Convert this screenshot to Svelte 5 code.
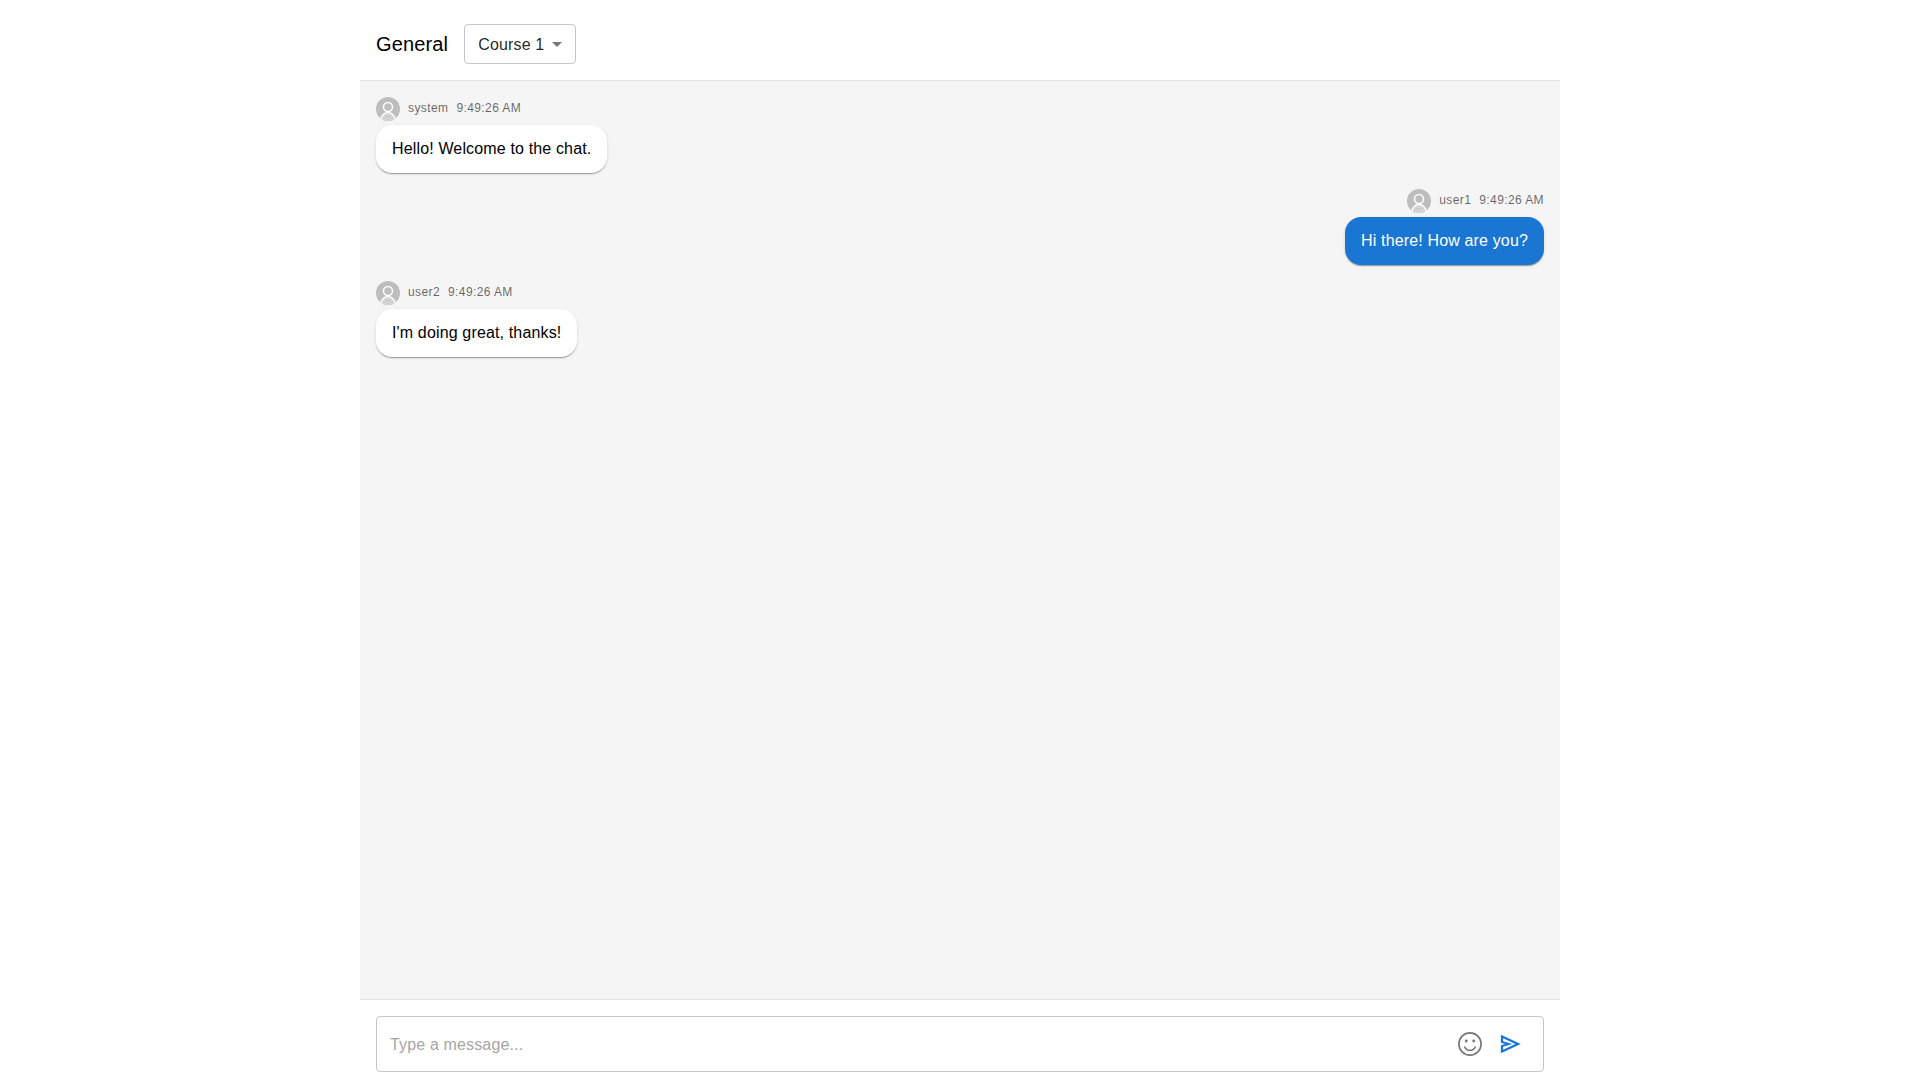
<script lang="ts">
    const messages = [
        { user: "system", time: "9:49:26 AM", text: "Hello! Welcome to the chat.", mine: false },
        { user: "user1", time: "9:49:26 AM", text: "Hi there! How are you?", mine: true },
        { user: "user2", time: "9:49:26 AM", text: "I'm doing great, thanks!", mine: false }
    ];
</script>

<div class="chat">
    <header class="header">
        <h1 class="title">General</h1>
        <div class="select">
            <span class="value">Course 1</span>
            <svg class="caret" viewBox="0 0 24 24"><path d="M7 10l5 5 5-5z" /></svg>
        </div>
    </header>

    <main class="messages">
        {#each messages as m}
            <div class="message" class:mine={m.mine}>
                <div class="meta">
                    <span class="avatar">
                        <svg viewBox="0 0 24 24">
                            <circle class="head" cx="12" cy="10" r="4.5" />
                            <path class="body" d="M4.5 25c0-6 3.5-9.500 7.500-9.500s7.500 3.500 7.500 9.500" />
                            <path class="dots" d="M10 19.500h.6M13.400 19.500h.6M11.700 21.200h.6" />
                        </svg>
                    </span>
                    <span class="name">{m.user}</span>
                    <span class="time">{m.time}</span>
                </div>
                <div class="bubble">{m.text}</div>
            </div>
        {/each}
    </main>

    <footer class="footer">
        <div class="input">
            <span class="placeholder">Type a message...</span>
            <button class="icon-btn" aria-label="Emoji">
                <svg viewBox="0 0 24 24">
                    <circle class="face" cx="12" cy="12" r="11.100" />
                    <circle class="eye" cx="8.300" cy="9" r="1.400" />
                    <circle class="eye" cx="15.700" cy="9" r="1.400" />
                    <path class="smile" d="M6.500 14.500c1 2.500 3 3.900 5.500 3.900s4.500-1.400 5.500-3.900" />
                </svg>
            </button>
            <button class="icon-btn" aria-label="Send">
                <svg viewBox="0 0 24 24">
                    <path class="send" d="M4 4.500L20 12 4 19.500v-5.500l6.500-2L4 10z" />
                </svg>
            </button>
        </div>
    </footer>
</div>

<style>
    :global(body) {
        margin: 0;
        background: #fff;
        overflow: hidden;
    }

    .chat {
        width: 1200px;
        height: 100vh;
        margin: 0 auto;
        display: flex;
        flex-direction: column;
        font-family: "Liberation Sans", Arial, sans-serif;
        color: rgba(0, 0, 0, 0.87);
    }

    .header {
        display: flex;
        align-items: center;
        gap: 16px;
        padding: 24px 16px 16px;
        border-bottom: 1px solid #e0e0e0;
    }

    .title {
        margin: 0;
        font-size: 20px;
        font-weight: 400;
        line-height: 40px;
        letter-spacing: 0.15px;
        color: #000;
    }

    .select {
        box-sizing: border-box;
        width: 112px;
        height: 40px;
        padding-left: 13px;
        display: flex;
        align-items: center;
        border: 1px solid #c4c4c4;
        border-radius: 4px;
        font-size: 16px;
        letter-spacing: 0.15px;
    }

    .value {
        padding-top: 2px;
    }

    .caret {
        width: 24px;
        height: 24px;
        margin-left: 1px;
        fill: #757575;
    }

    .messages {
        flex: 1;
        padding: 16px;
        background: #f5f5f5;
        border-bottom: 1px solid #e0e0e0;
    }

    .message {
        display: flex;
        flex-direction: column;
        align-items: flex-start;
        margin-bottom: 16px;
    }

    .message.mine {
        align-items: flex-end;
    }

    .meta {
        display: flex;
        align-items: center;
        height: 24px;
        margin-bottom: 4px;
        font-size: 12px;
        letter-spacing: 0.4px;
        color: rgba(0, 0, 0, 0.6);
    }

    .avatar {
        width: 24px;
        height: 24px;
        margin-right: 8px;
        border-radius: 50%;
        background: #bdbdbd;
        overflow: hidden;
    }

    .avatar svg {
        display: block;
        width: 24px;
        height: 24px;
    }

    .head,
    .body {
        fill: none;
        stroke: #fff;
        stroke-width: 1.5;
    }

    .body {
        fill: #d4d4d4;
    }

    .dots {
        fill: none;
        stroke: #999;
        stroke-width: 0.7;
    }

    .name,
    .time {
        padding-bottom: 2px;
    }

    .name {
        margin-right: 8px;
    }

    .bubble {
        padding: 12px 16px;
        border-radius: 16px;
        background: #fff;
        color: #000;
        font-size: 16px;
        line-height: 24px;
        letter-spacing: 0.15px;
        box-shadow: 0 2px 1px -1px rgba(0, 0, 0, 0.2), 0 1px 1px 0 rgba(0, 0, 0, 0.14), 0 1px 3px 0 rgba(0, 0, 0, 0.12);
    }

    .mine .bubble {
        background: #1976d2;
        color: #fff;
    }

    .footer {
        padding: 16px 16px 8px;
    }

    .input {
        box-sizing: border-box;
        height: 56px;
        padding: 0 13px;
        display: flex;
        align-items: center;
        border: 1px solid #c4c4c4;
        border-radius: 4px;
    }

    .placeholder {
        flex: 1;
        padding-top: 2px;
        font-size: 16px;
        letter-spacing: 0.15px;
        color: #a6a6a6;
    }

    .icon-btn {
        width: 40px;
        height: 40px;
        padding: 8px;
        border: 0;
        background: none;
    }

    .icon-btn svg {
        display: block;
        width: 24px;
        height: 24px;
    }

    .face,
    .smile {
        fill: none;
        stroke: #757575;
        stroke-width: 1.6;
    }

    .eye {
        fill: #757575;
    }

    .send {
        fill: none;
        stroke: #1976d2;
        stroke-width: 2.300;
    }
</style>
